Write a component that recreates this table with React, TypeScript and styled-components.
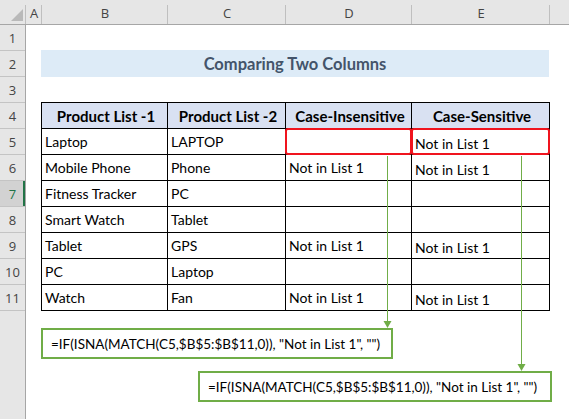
import React from "react";
import styled, { createGlobalStyle } from "styled-components";

const GlobalStyle = createGlobalStyle`
  html, body { margin: 0; padding: 0; background: #fff; }
  body { width: 569px; height: 419px; overflow: hidden; }
  #root { width: 569px; height: 419px; }
`;

const CELL_FONT = `"Lato", "Open Sans", sans-serif`;
const UI_FONT = `"Open Sans", "Noto Sans", sans-serif`;

const Sheet = styled.div`
  position: relative;
  width: 569px;
  height: 419px;
  display: flex;
  flex-direction: column;
  background: #fff;
  overflow: hidden;
`;

const ColumnBar = styled.div`
  display: flex;
  flex: none;
  height: 25px;
  box-sizing: border-box;
  background: #e6e6e6;
  border-bottom: 1px solid #a6a6a6;
`;

const ColHead = styled.div<{ $w?: number; $last?: boolean }>`
  ${(p) => (p.$w ? `width: ${p.$w}px; flex: none;` : `flex: 1;`)}
  box-sizing: border-box;
  display: flex;
  align-items: center;
  justify-content: center;
  padding-top: 1px;
  font-family: ${UI_FONT};
  font-size: 13px;
  color: #444;
  background: ${(p) =>
    p.$last
      ? "none"
      : "linear-gradient(#bfbfbf, #bfbfbf) right bottom / 1px 19px no-repeat"};
`;

const CornerHead = styled(ColHead)`
  align-items: flex-end;
  justify-content: flex-end;
  padding: 0 3px 3px 0;
`;

const Body = styled.div`
  flex: 1;
  display: flex;
  min-height: 0;
`;

const RowHeads = styled.div`
  width: 26px;
  flex: none;
  box-sizing: border-box;
  background: #e6e6e6;
  border-right: 1px solid #a6a6a6;
  display: flex;
  flex-direction: column;
`;

const RowHead = styled.div<{ $active?: boolean }>`
  height: 26px;
  flex: none;
  box-sizing: border-box;
  border-bottom: 1px solid #c4c4c4;
  display: flex;
  align-items: flex-end;
  justify-content: center;
  padding-bottom: 3px;
  font-family: ${UI_FONT};
  font-size: 13px;
  color: ${(p) => (p.$active ? "#217346" : "#444")};
  background: ${(p) => (p.$active ? "#d2d2d2" : "transparent")};
  box-shadow: ${(p) => (p.$active ? "inset -2px 0 0 #217346" : "none")};
`;

const Content = styled.div`
  flex: 1;
  display: flex;
  flex-direction: column;
  align-items: flex-start;
  padding-left: 15px;
`;

const BlankRow = styled.div`
  height: 25px;
  flex: none;
`;

const TitleBand = styled.div`
  width: 508px;
  height: 27px;
  flex: none;
  background: #ddebf7;
  display: flex;
  align-items: center;
  justify-content: center;
  font-family: ${CELL_FONT};
  font-weight: 700;
  font-size: 16.5px;
  color: #44546a;
  padding-top: 1px;
  box-sizing: border-box;
`;

const Grid = styled.div`
  display: grid;
  grid-template-columns: 125px 117px 125px 137px;
  grid-auto-rows: 25px;
  gap: 1px;
  background: #000;
  border: 1px solid #000;
  flex: none;
`;

const Cell = styled.div<{
  $head?: boolean;
  $valign?: "center" | "end";
  $hl?: boolean;
}>`
  position: relative;
  background: ${(p) => (p.$head ? "#d9e1f2" : "#fff")};
  display: flex;
  align-items: ${(p) => (p.$valign === "end" ? "flex-end" : "center")};
  justify-content: ${(p) => (p.$head ? "center" : "flex-start")};
  padding: ${(p) => (p.$valign === "end" ? "0 0 2px 3px" : "0 0 0 3px")};
  box-sizing: border-box;
  font-family: ${CELL_FONT};
  font-size: ${(p) => (p.$head ? "15px" : "14px")};
  font-weight: ${(p) => (p.$head ? 700 : 400)};
  color: #000;
  white-space: nowrap;
  ${(p) =>
    p.$hl
      ? `z-index: 1; outline: 2px solid #f0141e; outline-offset: -1px; border-radius: 2px;`
      : ""}
`;

const FormulaBox = styled.div<{ $w: number; $indent: number; $gap: number }>`
  width: ${(p) => p.$w}px;
  height: 31px;
  margin-left: ${(p) => p.$indent}px;
  margin-top: ${(p) => p.$gap}px;
  flex: none;
  box-sizing: border-box;
  border: 2px solid #70ad47;
  background: #fff;
  display: flex;
  align-items: center;
  padding-left: 8px;
  font-family: ${CELL_FONT};
  font-size: 13.5px;
  color: #000;
  white-space: nowrap;
`;

const Connectors = styled.svg`
  position: absolute;
  left: 0;
  top: 0;
  width: 569px;
  height: 419px;
  pointer-events: none;
  z-index: 2;
`;

const cols = [
  { label: "A", w: 16 },
  { label: "B", w: 126 },
  { label: "C", w: 118 },
  { label: "D", w: 126 },
  { label: "E", w: 138 },
];

const rows: [string, string, string, string][] = [
  ["Laptop", "LAPTOP", "", "Not in List 1"],
  ["Mobile Phone", "Phone", "Not in List 1", "Not in List 1"],
  ["Fitness Tracker", "PC", "", ""],
  ["Smart Watch", "Tablet", "", ""],
  ["Tablet", "GPS", "Not in List 1", "Not in List 1"],
  ["PC", "Laptop", "", ""],
  ["Watch", "Fan", "Not in List 1", "Not in List 1"],
];

const headers = ["Product List -1", "Product List -2", "Case-Insensitive", "Case-Sensitive"];

const formula = `=IF(ISNA(MATCH(C5,$B$5:$B$11,0)), "Not in List 1", "")`;

export default function App() {
  return (
    <>
      <GlobalStyle />
      <Sheet>
        <ColumnBar>
          <CornerHead $w={26}>
            <svg width="12" height="12" viewBox="0 0 12 12">
              <polygon points="12,0 12,12 0,12" fill="#b9b9b9" />
            </svg>
          </CornerHead>
          {cols.map((c) => (
            <ColHead key={c.label} $w={c.w}>
              {c.label}
            </ColHead>
          ))}
          <ColHead $last />
        </ColumnBar>
        <Body>
          <RowHeads>
            {Array.from({ length: 11 }, (_, i) => (
              <RowHead key={i} $active={i === 6}>
                {i + 1}
              </RowHead>
            ))}
          </RowHeads>
          <Content>
            <BlankRow />
            <TitleBand>Comparing Two Columns</TitleBand>
            <BlankRow />
            <Grid>
              {headers.map((h) => (
                <Cell key={h} $head>
                  {h}
                </Cell>
              ))}
              {rows.map((r, ri) =>
                r.map((v, ci) => (
                  <Cell
                    key={`${ri}-${ci}`}
                    $valign={ci === 3 ? "end" : "center"}
                    $hl={ri === 0 && ci >= 2}
                  >
                    {v}
                  </Cell>
                ))
              )}
            </Grid>
            <FormulaBox $w={352} $indent={0} $gap={17}>
              {formula}
            </FormulaBox>
            <FormulaBox $w={354} $indent={157} $gap={12}>
              {formula}
            </FormulaBox>
          </Content>
        </Body>
        <Connectors viewBox="0 0 569 419">
          <line x1="387.5" y1="156" x2="387.5" y2="322" stroke="#70ad47" strokeWidth="1" />
          <polygon points="383.5,321 391.5,321 387.5,328" fill="#70ad47" />
          <line x1="521.5" y1="156" x2="521.5" y2="365" stroke="#70ad47" strokeWidth="1" />
          <polygon points="517.5,364 525.5,364 521.5,371" fill="#70ad47" />
        </Connectors>
      </Sheet>
    </>
  );
}
